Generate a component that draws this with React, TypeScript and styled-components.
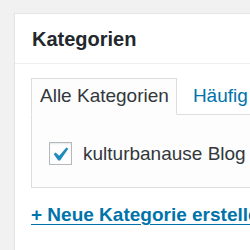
import React from "react";
import styled, { createGlobalStyle } from "styled-components";

const GlobalStyle = createGlobalStyle`
  html, body {
    margin: 0;
    padding: 0;
    background: #f1f1f1;
    overflow: hidden;
  }
  body {
    font-family: "Liberation Sans", Arial, sans-serif;
    color: #32373c;
  }
`;

const Page = styled.div`
  width: 250px;
  height: 250px;
  padding: 13px 0 0 14px;
  box-sizing: border-box;
  overflow: hidden;
`;

const Postbox = styled.div`
  width: 300px;
  height: 260px;
  background: #fff;
  border: 1px solid #e5e5e5;
  box-shadow: 0 1px 1px rgba(0, 0, 0, 0.04);
`;

const Title = styled.h2`
  margin: 0;
  padding: 2px 0 0 17px;
  height: 47px;
  line-height: 47px;
  font-size: 20px;
  font-weight: 700;
  color: #23282d;
  border-bottom: 1px solid #eee;
`;

const Inside = styled.div`
  padding: 14px 0 0 16px;
`;

const Tabs = styled.ul`
  display: flex;
  margin: 0 0 -1px;
  padding: 0;
  list-style: none;
  position: relative;
  z-index: 1;
`;

const Tab = styled.li<{ $active?: boolean }>`
  padding: 0 7px 2px 8px;
  margin-right: 7px;
  height: 33px;
  line-height: 33px;
  font-size: 19px;
  white-space: nowrap;
  color: ${(p) => (p.$active ? "#32373c" : "#0073aa")};
  background: ${(p) => (p.$active ? "#fdfdfd" : "transparent")};
  border: 1px solid ${(p) => (p.$active ? "#ddd" : "transparent")};
  border-bottom: 1px solid ${(p) => (p.$active ? "#fdfdfd" : "transparent")};
`;

const TabPanel = styled.div`
  background: #fdfdfd;
  border: 1px solid #ddd;
  padding: 27px 0 22px 17px;
`;

const Row = styled.label`
  display: flex;
  align-items: center;
  height: 23px;
  font-size: 19px;
  line-height: 23px;
  white-space: nowrap;
  color: #32373c;
`;

const Box = styled.span`
  display: flex;
  align-items: center;
  justify-content: center;
  width: 21px;
  height: 21px;
  margin-right: 11px;
  border: 1px solid #b4b9be;
  background: #fff;
  box-shadow: inset 0 1px 2px rgba(0, 0, 0, 0.1);
  flex-shrink: 0;
  overflow: visible;

  svg {
    flex-shrink: 0;
  }
`;

const AddNew = styled.a`
  display: block;
  margin: 15px 0 0 0;
  font-size: 19px;
  line-height: 23px;
  font-weight: 700;
  color: #0073aa;
  text-decoration: underline;
  text-underline-offset: 3px;
  white-space: nowrap;
`;

const Check = () => (
  <svg width="28" height="28" viewBox="0.98 -0.45 20 20">
    <path
      d="M14.83 4.89l1.34.94-5.81 8.38H9.02L5.78 9.67l1.34-1.25 2.57 2.4z"
      fill="#1e8cbe"
    />
  </svg>
);

export default function App() {
  return (
    <Page>
      <GlobalStyle />
      <Postbox>
        <Title>Kategorien</Title>
        <Inside>
          <Tabs>
            <Tab $active>Alle Kategorien</Tab>
            <Tab>Häufig genutzt</Tab>
          </Tabs>
          <TabPanel>
            <Row>
              <Box>
                <Check />
              </Box>
              kulturbanause Blog
            </Row>
          </TabPanel>
          <AddNew href="#">+ Neue Kategorie erstellen</AddNew>
        </Inside>
      </Postbox>
    </Page>
  );
}
